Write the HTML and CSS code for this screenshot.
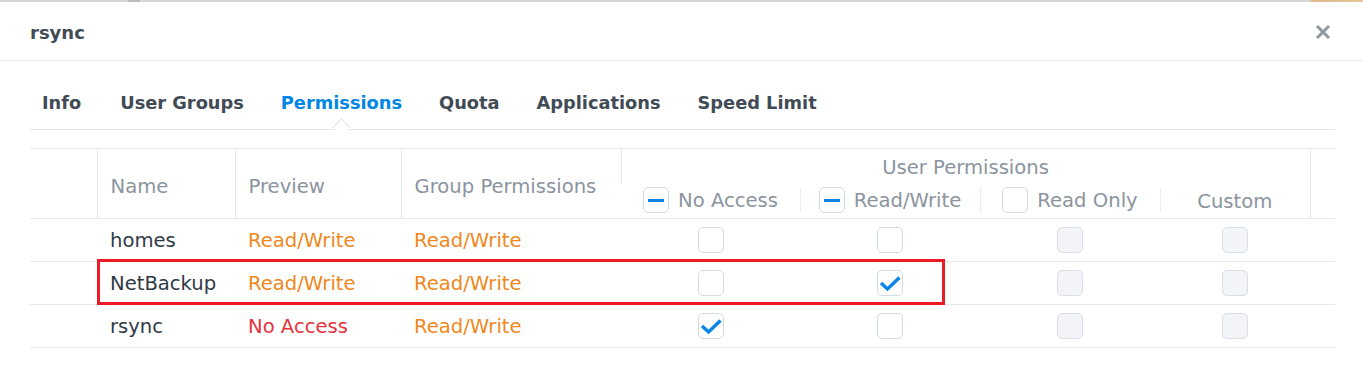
FILE: index.html
```html
<!DOCTYPE html>
<html lang="en">
<head>
    <meta charset="UTF-8">
    <title>rsync</title>
    <link rel="stylesheet" href="styles.css">
</head>
<body>
    <div class="backdrop"></div>

    <div class="dialog">
        <div class="dialog-header">
            <span class="dialog-title">rsync</span>
            <svg class="close" width="16" height="16" viewBox="0 0 16 16">
                <path d="M2 2 L14 14 M14 2 L2 14" stroke="#8f98a1" stroke-width="3" fill="none"/>
            </svg>
        </div>

        <div class="tabs">
            <span class="tab first">Info</span>
            <span class="tab">User Groups</span>
            <span class="tab active">Permissions</span>
            <span class="tab">Quota</span>
            <span class="tab">Applications</span>
            <span class="tab">Speed Limit</span>
        </div>

        <div class="grid-wrap">
            <table class="perm-table">
                <colgroup>
                    <col style="width:67px">
                    <col style="width:138px">
                    <col style="width:166px">
                    <col style="width:220px">
                    <col style="width:179px">
                    <col style="width:180px">
                    <col style="width:180px">
                    <col style="width:150px">
                    <col style="width:25px">
                </colgroup>
                <thead>
                    <tr class="head-top">
                        <th rowspan="2"></th>
                        <th rowspan="2" class="sep">Name</th>
                        <th rowspan="2" class="sep">Preview</th>
                        <th rowspan="2" class="sep">Group Permissions</th>
                        <th colspan="4" class="sep group">User Permissions</th>
                        <th rowspan="2" class="sep"></th>
                    </tr>
                    <tr class="head-sub">
                        <th class="sub"><span class="box partial"></span>No Access</th>
                        <th class="sub divider"><span class="box partial"></span>Read/Write</th>
                        <th class="sub divider"><span class="box"></span>Read Only</th>
                        <th class="sub divider">Custom</th>
                    </tr>
                </thead>
                <tbody>
                    <tr>
                        <td></td>
                        <td class="name">homes</td>
                        <td class="rw">Read/Write</td>
                        <td class="rw">Read/Write</td>
                        <td class="chk"><span class="box"></span></td>
                        <td class="chk"><span class="box"></span></td>
                        <td class="chk"><span class="box off"></span></td>
                        <td class="chk"><span class="box off"></span></td>
                        <td></td>
                    </tr>
                    <tr>
                        <td></td>
                        <td class="name">NetBackup</td>
                        <td class="rw">Read/Write</td>
                        <td class="rw">Read/Write</td>
                        <td class="chk"><span class="box"></span></td>
                        <td class="chk"><span class="box">
                            <svg width="26" height="26" viewBox="0 0 26 26"><path d="M4 13 L10.5 19 L22.5 7.5" stroke="#0a84e8" stroke-width="3.4" fill="none"/></svg>
                        </span></td>
                        <td class="chk"><span class="box off"></span></td>
                        <td class="chk"><span class="box off"></span></td>
                        <td></td>
                    </tr>
                    <tr>
                        <td></td>
                        <td class="name">rsync</td>
                        <td class="na">No Access</td>
                        <td class="rw">Read/Write</td>
                        <td class="chk"><span class="box">
                            <svg width="26" height="26" viewBox="0 0 26 26"><path d="M4 13 L10.5 19 L22.5 7.5" stroke="#0a84e8" stroke-width="3.4" fill="none"/></svg>
                        </span></td>
                        <td class="chk"><span class="box"></span></td>
                        <td class="chk"><span class="box off"></span></td>
                        <td class="chk"><span class="box off"></span></td>
                        <td></td>
                    </tr>
                </tbody>
            </table>
            <div class="highlight"></div>
        </div>
    </div>
</body>
</html>
```

FILE: styles.css
```css
body {
    margin: 0;
    background: #fff;
    font-family: "DejaVu Sans", Verdana, sans-serif;
    color: #414b55;
}

.backdrop {
    height: 2px;
    background: linear-gradient(to right,
        #d6d6d6 0, #d6d6d6 128px,
        #bcbcbc 128px, #bcbcbc 140px,
        #d6d6d6 140px, #d6d6d6 1311px,
        #e0b88d 1311px, #e6c49c 100%);
}

.dialog {
    background: #fff;
}

.dialog-header {
    display: flex;
    align-items: center;
    justify-content: space-between;
    height: 58px;
    padding: 0 32px 0 30px;
    border-bottom: 1px solid #e3e8ee;
}

.dialog-title {
    font-size: 18px;
    font-weight: bold;
    color: #414b55;
    margin-top: 2px;
}

.close {
    margin-top: 1px;
}

.tabs {
    position: relative;
    display: flex;
    gap: 37px;
    margin: 0 28px 0 30px;
    padding: 30px 12px 14px;
    border-bottom: 1px solid #dfe5eb;
}

.tab {
    font-size: 17.8px;
    font-weight: bold;
    line-height: 24px;
    color: #414b55;
}

.tab.first {
    margin-right: 2px;
}

.tab.active {
    position: relative;
    color: #0086e5;
}

.tab.active::after {
    content: "";
    position: absolute;
    left: 50%;
    bottom: -19px;
    width: 12px;
    height: 12px;
    margin-left: -6px;
    background: #fff;
    border-top: 1px solid #dfe5eb;
    border-left: 1px solid #dfe5eb;
    transform: rotate(45deg);
}

.grid-wrap {
    position: relative;
    margin: 18px 28px 0 30px;
}

.perm-table {
    width: 1305px;
    table-layout: fixed;
    border-collapse: collapse;
    font-size: 19.6px;
}

.perm-table th {
    font-weight: normal;
    color: #8b949e;
    text-align: left;
    padding: 0 0 0 13px;
    white-space: nowrap;
}

.perm-table th[rowspan] {
    padding-top: 5px;
}

.head-top th {
    border-top: 1px solid #e3e8ee;
    height: 33px;
}

.perm-table th.sep {
    border-left: 1px solid #e3e8ee;
}

.head-top th.group {
    text-align: center;
    padding: 2px 0 0;
    vertical-align: middle;
}

.head-sub th.sub {
    height: 34px;
    padding: 0;
    text-align: center;
}

.head-sub th.divider {
    background: linear-gradient(#e8edf2, #e8edf2) left 4px / 1px 24px no-repeat;
}

.head-sub .box {
    vertical-align: middle;
    margin: -3px 9px 0 0;
}

.perm-table thead tr:last-child th,
.perm-table thead th[rowspan] {
    border-bottom: 1px solid #e3e8ee;
}

.perm-table td {
    height: 42px;
    padding: 0 0 0 13px;
    border-bottom: 1px solid #e3e8ee;
    white-space: nowrap;
}

.name {
    color: #2f3a45;
}

.rw {
    color: #f0881c;
}

.na {
    color: #e7343c;
}

.perm-table td.chk {
    padding: 0;
    text-align: center;
}

.box {
    display: inline-block;
    box-sizing: border-box;
    width: 26px;
    height: 26px;
    border: 1px solid #d3dbe4;
    border-radius: 5px;
    background: #fff;
    vertical-align: middle;
    position: relative;
}

.box svg {
    display: block;
    margin: -1px;
}

.box.off {
    background: #f2f4f7;
    border-color: #d8dfe6;
}

.box.partial::after {
    content: "";
    position: absolute;
    left: 4px;
    top: 10.5px;
    width: 16px;
    height: 3px;
    background: #0a84e8;
}

.highlight {
    position: absolute;
    left: 67px;
    top: 111px;
    width: 848px;
    height: 46px;
    box-sizing: border-box;
    border: 3px solid #ec1c24;
}
```
